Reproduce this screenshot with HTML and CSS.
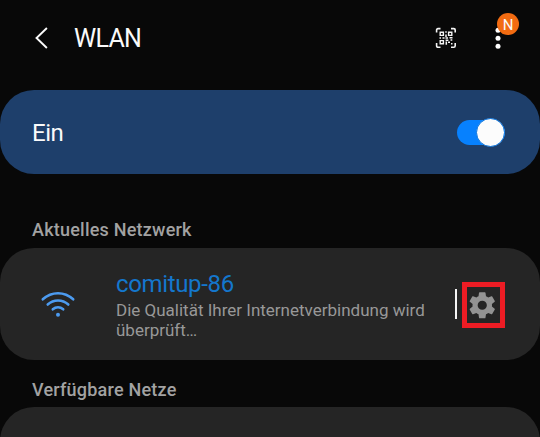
FILE: index.html
```html
<!DOCTYPE html>
<html lang="de">
<head>
<meta charset="utf-8">
<title>WLAN</title>
<link rel="stylesheet" href="styles.css">
</head>
<body>
<header class="topbar">
  <svg class="back" width="16" height="24" viewBox="0 0 16 24"><path d="M13.900 2 3.500 12l10.400 10" fill="none" stroke="#fafafa" stroke-width="1.900"/></svg>
  <h1 class="title">WLAN</h1>
  <svg class="qr" width="22" height="22" viewBox="0 0 22 22" fill="none" stroke="#f4f4f4">
    <path d="M1.600 5.500V3q0-1.400 1.400-1.400h2.500M16 1.600h2.800q1.400 0 1.400 1.400v2.500M20.200 16v2.800q0 1.400-1.400 1.400H16M5.500 20.200H3q-1.400 0-1.400-1.400V16" stroke-width="1.600"/>
    <path d="M5.200 5.200h3.200v3.200H5.200zM13.600 5.200h3.200v3.200h-3.200zM5.200 13.600h3.200v3.200H5.200z" stroke-width="1.400"/>
    <path d="M11 4.200v1.600M11 7.500v2.500M4.500 11h1.500M7.500 11h2M10.500 11h2.500M14.500 10.800h3M10.600 13.200h2.800M11.300 14.500v3.300M13 15.300h2M15.500 13h1.800M16 16.800h1.500" stroke-width="1.500"/>
  </svg>
  <div class="more">
    <svg width="6" height="24" viewBox="0 0 6 24" fill="#fff"><circle cx="3" cy="4.300" r="2.500"/><circle cx="3" cy="12.300" r="2.500"/><circle cx="3" cy="20.300" r="2.500"/></svg>
    <span class="badge">N</span>
  </div>
</header>
<main>
  <section class="card power">
    <span class="state">Ein</span>
    <span class="switch"><span class="thumb"></span></span>
  </section>
  <h2 class="label current">Aktuelles Netzwerk</h2>
  <section class="card network">
    <svg class="wifi" width="36" height="28" viewBox="0 0 36 28" fill="none" stroke="#4c9bf0" stroke-width="2.600" stroke-linecap="round"><path d="M2.800 9.300Q9.500 3.200 18 3.200T33.200 9.300M7.700 14.500Q12.200 10.500 18 10.500T28.300 14.500M12.800 19.300Q15.200 17.200 18 17.200T23.200 19.300"/><circle cx="18" cy="24.700" r="2" fill="#4c9bf0" stroke="none"/></svg>
    <div class="info">
      <div class="ssid">comitup-86</div>
      <p class="status">Die Qualität Ihrer Internetverbindung wird<br>überprüft…</p>
    </div>
    <span class="divider"></span>
    <span class="settings"><svg width="32.500" height="32.500" viewBox="0 0 24 24" fill="#939393"><path d="M19.140 12.940c.04-.3.06-.61.06-.94 0-.32-.02-.64-.07-.94l2.030-1.580c.18-.14.23-.41.12-.61l-1.920-3.320c-.12-.22-.37-.29-.59-.22l-2.390.96c-.5-.38-1.030-.7-1.620-.94l-.36-2.540c-.04-.24-.24-.41-.48-.41h-3.840c-.24 0-.43.17-.47.41l-.36 2.540c-.59.24-1.130.57-1.620.94l-2.390-.96c-.22-.08-.47 0-.59.22L2.740 8.870c-.12.21-.08.47.12.61l2.030 1.580c-.05.3-.09.63-.09.94s.02.64.07.94l-2.030 1.580c-.18.14-.23.41-.12.61l1.920 3.320c.12.22.37.29.59.22l2.390-.96c.5.38 1.030.7 1.620.94l.36 2.540c.05.24.24.41.48.41h3.840c.24 0 .44-.17.47-.41l.36-2.540c.59-.24 1.130-.56 1.620-.94l2.390.96c.22.08.47 0 .59-.22l1.920-3.320c.12-.22.07-.47-.12-.61zM12 15.400a3.400 3.400 0 1 1 0-6.800 3.400 3.400 0 0 1 0 6.800z"/></svg></span>
  </section>
  <h2 class="label available">Verfügbare Netze</h2>
  <section class="card list"></section>
</main>
</body>
</html>
```
FILE: styles.css
```css
* { box-sizing: border-box; }
body {
  margin: 0;
  width: 540px;
  height: 437px;
  overflow: hidden;
  background: #080808;
  color: #fafafa;
  font-family: Roboto, sans-serif;
}
svg { display: block; flex: none; }
h1, h2, p { margin: 0; }
main { height: 347px; overflow: hidden; }
.topbar {
  display: flex;
  align-items: center;
  height: 90px;
  padding: 0 39px 14px 33px;
}
.title {
  margin: 1px 0 0 25px;
  font-size: 25px;
  line-height: 30px;
  font-weight: 400;
  letter-spacing: -.7px;
}
.qr { margin-left: auto; }
.more { position: relative; margin-left: 38px; }
.badge {
  position: absolute;
  left: 2px;
  top: -13px;
  width: 22px;
  height: 22px;
  border-radius: 50%;
  background: #f26b11;
  font-size: 15px;
  line-height: 24px;
  text-align: center;
}
.card { display: flex; background: #252525; }
.power {
  height: 84px;
  align-items: center;
  justify-content: space-between;
  padding: 0 35px 0 32px;
  border-radius: 34px;
  background: #1e3f6b;
}
.state { font-size: 24px; line-height: 30px; margin-top: 2px; letter-spacing: -.5px; }
.switch {
  display: flex;
  justify-content: flex-end;
  align-items: center;
  width: 48px;
  height: 25px;
  border-radius: 13px;
  background: #0781fe;
}
.thumb {
  flex: none;
  width: 29px;
  height: 29px;
  border: 1.500px solid #0b74dd;
  border-radius: 50%;
  background: #fcfcfc;
}
.label {
  padding-left: 32px;
  color: #a2a2a2;
  font-size: 18px;
  line-height: 24px;
  font-weight: 500;
  letter-spacing: .22px;
}
.current { height: 74px; padding-top: 44px; }
.network {
  height: 112px;
  padding: 22px 35px 0 40px;
  border-radius: 34px;
}
.wifi { margin-top: 20px; }
.info { width: 378.500px; padding-left: 40px; white-space: nowrap; }
.ssid { color: #1477cd; font-size: 24px; line-height: 28px; letter-spacing: -.35px; }
.status { margin-top: 2px; color: #989898; font-size: 17px; line-height: 20px; }
.divider { flex: none; width: 2px; height: 30px; margin: 19px 5.500px 0 0; background: #f4f4f4; }
.settings {
  display: flex;
  flex: none;
  align-items: center;
  justify-content: center;
  width: 43px;
  height: 46px;
  margin-top: 12px;
  padding-right: 2px;
  border: 5px solid #ed1c24;
}
.available { height: 47px; padding-top: 18px; }
.list { height: 80px; border-radius: 34px; }
```
